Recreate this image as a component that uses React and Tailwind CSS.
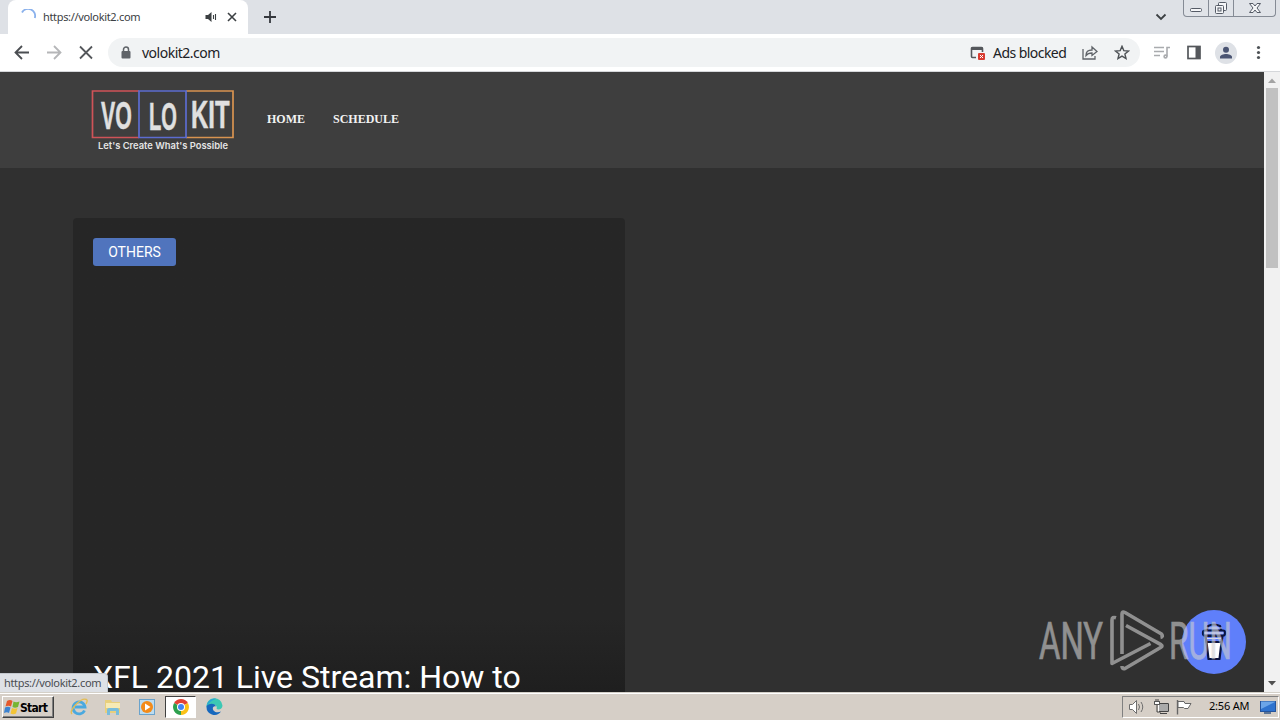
import React from 'react';

const TabStrip = () => (
  <div className="flex h-[34px] shrink-0 items-start bg-[#dee1e6] pl-2">
    <div className="flex h-[34px] w-60 items-center rounded-t-lg bg-white pl-3">
      <svg className="h-4 w-4 shrink-0" viewBox="0 0 16 16" fill="none">
        <path d="M2 3.5A7 7 0 0 1 14.8 9" stroke="#8ab1ec" strokeWidth="1.8" />
      </svg>
      <span className="ml-[7px] w-[162px] whitespace-nowrap text-[11px] tracking-[-0.33px] text-[#3c4043]">https://volokit2.com</span>
      <svg className="h-3 w-3 shrink-0" viewBox="0 0 12 12">
        <path d="M.5 4h2.500L6.500 1v10L3 8H.5z" fill="#3c4043" />
        <path d="M8.500 4v4M10.500 3v6" stroke="#3c4043" strokeWidth="1.100" />
      </svg>
      <svg className="ml-[9px] h-3 w-3 shrink-0" viewBox="0 0 12 12">
        <path d="M2 2l8 8M10 2l-8 8" stroke="#3c4043" strokeWidth="1.6" />
      </svg>
    </div>
    <svg className="ml-4 mt-[11px] h-3 w-3" viewBox="0 0 12 12">
      <path d="M6 0v12M0 6h12" stroke="#35383d" strokeWidth="1.8" />
    </svg>
    <svg className="ml-auto mr-4 mt-[13px] h-2 w-3" viewBox="0 0 12 8">
      <path d="M1.500 1.500L6 6l4.500-4.500" fill="none" stroke="#3c4043" strokeWidth="1.8" />
    </svg>
    <div className="mr-1 flex h-[17px] w-[93px] overflow-hidden rounded-b border border-t-0 border-[#858b95] bg-[#e0e3e8]">
      <svg className="h-full w-full" viewBox="0 0 91 16" fill="none" stroke="#555b66">
        <path d="M24.500 0v16M49.500 0v16" stroke="#858b95" />
        <rect x="6.500" y="8.500" width="11" height="3" rx="1" fill="#f5f6f8" />
        <rect x="34.500" y="2.500" width="8" height="8" rx="1" fill="#f5f6f8" />
        <rect x="31.500" y="5.500" width="8" height="8" rx="1" fill="#f5f6f8" />
        <rect x="34" y="8" width="3" height="3" />
        <path d="M65.500 3.500h3.500l2 2.500 2-2.500h3.500l-3.500 4.500 3.500 4.500h-3.500l-2-2.500-2 2.500h-3.500l3.500-4.500z" fill="#f5f6f8" />
      </svg>
    </div>
  </div>
);

const Toolbar = () => (
  <div className="flex h-[38px] shrink-0 items-center border-b border-[#d5d7da] bg-white px-[14px]">
    <svg className="h-4 w-4" viewBox="0 0 16 16" fill="none" stroke="#4b4e52" strokeWidth="1.8">
      <path d="M15 7.500H2M8 1L1.500 7.500 8 14" />
    </svg>
    <svg className="ml-4 h-4 w-4" viewBox="0 0 16 16" fill="none" stroke="#b5b6b8" strokeWidth="1.8">
      <path d="M1 7.500h13M8 1l6.500 6.500L8 14" />
    </svg>
    <svg className="ml-4 h-4 w-4" viewBox="0 0 16 16" stroke="#54575b" strokeWidth="1.800">
      <path d="M2 1.500l12 12M14 1.500l-12 12" />
    </svg>
    <div className="ml-[14px] flex h-[29px] w-[1032px] items-center rounded-full bg-[#f1f3f4] pl-3">
      <svg className="h-3.5 w-3" viewBox="0 0 12 14">
        <path d="M3.500 6V3.500a2.500 2.500 0 0 1 5 0V6" fill="none" stroke="#5f6368" strokeWidth="1.500" />
        <rect x="1.500" y="5" width="9" height="7.500" rx="1" fill="#5f6368" />
      </svg>
      <span className="ml-[10px] w-[828px] whitespace-nowrap text-[14px] tracking-[-0.5px] text-[#202124]">volokit2.com</span>
      <svg className="h-4 w-4 shrink-0" viewBox="0 0 16 16">
        <path d="M6 12.500H2.500a1 1 0 0 1-1-1v-8a1 1 0 0 1 1-1h9a1 1 0 0 1 1 1V7" fill="none" stroke="#54575b" strokeWidth="1.600" />
        <path d="M1.500 2h11v3h-11z" fill="#54575b" />
        <rect x="8" y="8" width="7" height="7" rx="1" fill="#d93b30" />
        <path d="M10 10l3 3M13 10l-3 3" stroke="#fff" />
      </svg>
      <span className="ml-[7px] w-[73px] whitespace-nowrap text-[14px] tracking-[-0.55px] text-[#202124]">Ads blocked</span>
      <svg className="ml-4 h-4 w-4 shrink-0" viewBox="0 0 16 16" fill="none" stroke="#5f6368" strokeWidth="1.300">
        <path d="M1 4v10h12v-3M4 10.500c0-4 2-5.500 6-5.500V2l5 4.500-5 4V8c-3 0-4.500.5-6 2.500z" />
      </svg>
      <svg className="ml-4 h-4 w-4 shrink-0" viewBox="0 0 16 16" fill="none" stroke="#4e5256" strokeWidth="1.400">
        <path d="M8 1.300l1.800 4.300 4.700.4-3.600 3 1.100 4.600L8 11.100l-4 2.500L5.100 9 1.500 6l4.700-.4z" />
      </svg>
    </div>
    <svg className="ml-[14px] h-4 w-4" viewBox="0 0 16 16" fill="none" stroke="#a9abae" strokeWidth="1.600">
      <path d="M0 2.500h10M0 6.500h10M0 10.500h6M13 11.500v-9h3" />
      <circle cx="11.500" cy="11.500" r="1.400" />
    </svg>
    <svg className="ml-4 h-4 w-4" viewBox="0 0 16 16">
      <rect x="2" y="1.500" width="12" height="12" fill="none" stroke="#54575b" strokeWidth="1.700" />
      <path d="M9.500 1.500H14v12H9.500z" fill="#54575b" />
    </svg>
    <svg className="ml-[13px] h-[22px] w-[22px]" viewBox="0 0 22 22">
      <circle cx="11" cy="11" r="11" fill="#dee1e6" />
      <circle cx="11" cy="7.700" r="3" fill="#4a5472" />
      <path d="M5 16.500v-1.500c0-2 3.500-3 6-3s6 1 6 3v1.500z" fill="#4a5472" />
    </svg>
    <svg className="ml-auto h-4 w-4" viewBox="0 0 16 16" fill="#4e5256">
      <circle cx="8.500" cy="2.500" r="1.600" />
      <circle cx="8.500" cy="7.500" r="1.600" />
      <circle cx="8.500" cy="12.500" r="1.600" />
    </svg>
  </div>
);

const Logo = () => (
  <svg className="h-16 w-36" viewBox="0 0 144 64">
    <g fill="none" strokeWidth="1.700">
      <path d="M48 3H1.500v46.500H48" stroke="#cf5358" />
      <path d="M95 3h47v46.500H95" stroke="#d89350" />
      <path d="M48 3h47v46.500H48z" stroke="#5c6cd0" />
    </g>
    <g fill="#e0e0e0" stroke="#e0e0e0" strokeWidth="0.500" fontFamily="'Liberation Sans', sans-serif" fontSize="38" fontWeight="700">
      <text transform="translate(10 40.500) scale(.56 1)">VO</text>
      <text transform="translate(58 41.500) scale(.53 1)">LO</text>
      <text transform="translate(100 39.500) scale(.63 1)">KIT</text>
    </g>
    <text x="7" y="60.500" fill="#e4e4e4" fontFamily="Inter, sans-serif" fontSize="9.500" fontWeight="600" textLength="130" lengthAdjust="spacingAndGlyphs">Let's Create What's Possible</text>
  </svg>
);

const SiteHeader = () => (
  <header className="flex h-24 items-center bg-[#3e3e3e] pl-[91px]">
    <Logo />
    <nav className="flex gap-7 pb-0.5 pl-8 font-['Liberation_Serif',serif] text-[12px] font-bold text-[#f2f2f2]">
      <a className="whitespace-nowrap">HOME</a>
      <a className="whitespace-nowrap">SCHEDULE</a>
    </nav>
  </header>
);

const FeaturedPost = () => (
  <article className="ml-[73px] mt-[50px] flex h-[500px] w-[552px] flex-col items-start rounded bg-linear-to-b from-[#262626] from-80% to-[#1c1c1c] p-5 font-[Roboto,sans-serif] text-white">
    <span className="flex h-7 w-[83px] items-center justify-center rounded-[3px] bg-[#5074bd] text-[14px]">OTHERS</span>
    <h2 className="mt-[390px] whitespace-nowrap text-[32px] leading-[42px]">XFL 2021 Live Stream: How to</h2>
  </article>
);

const CoffeeButton = () => (
  <svg className="absolute left-[1182px] top-[538px] h-16 w-16" viewBox="0 0 64 64">
    <circle cx="32" cy="32" r="32" fill="#5f7ffa" />
    <g stroke="#0b1440" strokeWidth="2.200" strokeLinejoin="round">
      <path d="M24 28l2.500 21h11L40 28z" fill="#fff" />
      <path d="M24.500 21l1.500-5q6-3 12 0l1.500 5z" fill="#5f7ffa" />
      <rect x="21" y="20.500" width="22" height="5" rx="2" fill="#7994ff" />
      <path d="M23.500 26h17l-1 6h-15z" fill="#5f7ffa" />
    </g>
    <path d="M24 18h16M23 23h18M25 28.500h14" stroke="#d6dcf5" strokeWidth="1" />
  </svg>
);

const Watermark = () => (
  <svg className="absolute left-[1036px] top-[534px] h-[72px] w-[200px]" viewBox="0 0 200 72" opacity="0.6">
    <g fill="#d0d0d0" stroke="#d0d0d0" strokeWidth="0.700" fontFamily="Roboto, sans-serif" fontSize="51">
      <text x="3" y="53" textLength="64" lengthAdjust="spacingAndGlyphs">ANY</text>
      <text x="133" y="53" textLength="63" lengthAdjust="spacingAndGlyphs">RUN</text>
    </g>
    <g fill="none" stroke="#d0d0d0" strokeWidth="3.600" strokeLinejoin="round" strokeLinecap="round">
      <path d="M80 11.800Q76 10.500 76 14v43.500l38.500-20" strokeLinecap="butt" />
      <path d="M86 48V8q0-3 3-1.500L125.500 28q2 3-1 3.500" strokeLinecap="butt" />
      <path d="M90 19.500l35 19.200q2 1.300 0 2.600L89 62.500q-3 1-3-2.500" strokeLinecap="butt" />
    </g>
  </svg>
);

const Scrollbar = () => (
  <div className="flex w-4 shrink-0 flex-col items-center bg-[#f1f1f1]">
    <svg className="h-4 w-4" viewBox="0 0 16 16">
      <path d="M4 11h8L8 6.500z" fill="#a3a3a3" />
    </svg>
    <div className="h-[180px] w-3 bg-[#c1c1c1]"></div>
    <svg className="mt-auto mb-[1px] h-4 w-4" viewBox="0 0 16 16">
      <path d="M4 6h8l-4 4.500z" fill="#505050" />
    </svg>
  </div>
);

const QuickLaunch = () => (
  <div className="flex items-center">
    <svg className="ml-4 h-[18px] w-[18px]" viewBox="0 0 18 18" fill="none">
      <path d="M14.500 12.500A6 6 0 1 1 15 9H5" stroke="#4aa9df" strokeWidth="2.800" />
      <path d="M2 16C-2 13 11-1 16.500 1.500q1.500 1-.5 4.500" stroke="#e3bd55" strokeWidth="1.400" />
    </svg>
    <svg className="ml-4 h-[18px] w-[18px]" viewBox="0 0 18 18">
      <path d="M1 2h6l1 2h8v11H1z" fill="#e8cf7c" />
      <path d="M2 5h14v5H2z" fill="#f7eab4" />
      <path d="M3 17v-5q0-2 2-2h8q2 0 2 2v5h-3v-4H6v4z" fill="#79bddb" />
    </svg>
    <svg className="ml-4 h-[18px] w-[18px]" viewBox="0 0 18 18">
      <rect x="1.500" y="1.500" width="15" height="15" fill="#bcdcf0" stroke="#6aa3cc" />
      <circle cx="9" cy="9" r="6" fill="#f38b19" />
      <path d="M7 5.500L12.500 9 7 12.500z" fill="#fff" />
    </svg>
    <div className="ml-[9px] flex h-[22px] w-[31px] items-center justify-center border border-b-white border-l-[#404040] border-r-white border-t-[#404040] bg-white">
      <svg className="h-4 w-4" viewBox="0 0 16 16">
        <path d="M8 8L1.100 4A8 8 0 0 1 14.900 4z" fill="#e34235" />
        <path d="M8 8l6.900-4A8 8 0 0 1 8 16z" fill="#fbc116" />
        <path d="M8 8v8A8 8 0 0 1 1.100 4z" fill="#2da04e" />
        <circle cx="8" cy="8" r="4" fill="#fff" />
        <circle cx="8" cy="8" r="3" fill="#4285f4" />
      </svg>
    </div>
    <svg className="ml-[10px] h-[17px] w-[17px]" viewBox="0 0 17 17">
      <path d="M.5 9A8 8 0 0 1 16.500 7.500c0 4-4 4.500-6 3.500 1-2-.5-4.500-3.500-4.500C4 6.500 1 8 .5 9z" fill="#3cc8b4" />
      <path d="M.5 9C1 3 6 0 10 .700 5 3 1 6 .5 9z" fill="#2aa7d5" />
      <path d="M.5 8.500c1.500-3 8-4 9.500 0-3-1-4 2-2.500 4 2 2.500 5.500 2 7.500 1A8 8 0 0 1 .5 8.500z" fill="#1768bd" />
    </svg>
  </div>
);

const Tray = () => (
  <div className="ml-auto mr-[1px] flex h-[22px] w-[157px] items-center border border-b-white border-l-[#808080] border-r-white border-t-[#808080] pl-[6px]">
    <svg className="h-4 w-4" viewBox="0 0 16 16" fill="#fff" stroke="#6e6e6e">
      <path d="M.5 5.500h3l4-4v13l-4-4h-3z" />
      <path d="M9.500 5q2 3 0 6M12 3q3.500 5 0 10" fill="none" />
    </svg>
    <svg className="ml-2 h-4 w-4" viewBox="0 0 16 16" fill="none" stroke="#555">
      <rect x="5.500" y="4.500" width="10" height="8" fill="#aaa" stroke="#fff" />
      <path d="M6 4.500h9.500v8H6M1.500 2v3.500h5V2M3 3V0M5 3V0M4 5v8h4M7 14.500h7" stroke="#444" />
      <path d="M1.500 2.500h5v3h-5z" fill="#fff" />
    </svg>
    <svg className="ml-[7px] h-4 w-4" viewBox="0 0 16 16" fill="#fff" stroke="#666">
      <path d="M1.500 1v14.500" strokeWidth="1.400" />
      <path d="M2 2.500h6l1 2h6l-3 5H8.500l-1-1H2z" />
    </svg>
    <span className="ml-[17px] w-[42px] whitespace-nowrap text-[11px] tracking-[-0.2px] text-black">2:56 AM</span>
    <svg className="ml-[9px] h-4 w-4" viewBox="0 0 16 16">
      <rect x=".5" y="2.500" width="15" height="10" fill="#2f73ce" stroke="#25549c" />
      <path d="M1 10L15 3v-.5H1z" fill="#6ba5e8" />
      <path d="M4 14h7" stroke="#345785" strokeWidth="1.500" />
    </svg>
  </div>
);

const Taskbar = () => (
  <div className="flex h-7 shrink-0 items-center border-t border-[#d4d0c8] bg-[#d6cfc7] pl-0.5 shadow-[inset_0_1px_0_#fff]">
    <div className="flex h-[22px] w-[52px] items-center border border-b-[#404040] border-l-white border-r-[#404040] border-t-white pl-[1px] shadow-[inset_-1px_-1px_0_#808080]">
      <svg className="h-4 w-4 shrink-0" viewBox="0 0 16 16">
        <path d="M3 2q3-2 5.500 0L7 7.500Q4.500 6 1.500 7.500z" fill="#e5582b" />
        <path d="M9.500 2.500q2.500 1.500 6 0L14 8q-3 1.500-5.500 0z" fill="#76b531" />
        <path d="M1 8.500q3-1.500 5.500 0L5 14q-2-1.500-5 0z" fill="#3d83d0" />
        <path d="M8 9q3 1.500 5.500 0L12 14.500q-3 1.500-5.500 0z" fill="#f3c435" />
      </svg>
      <span className="pt-0.5 font-['DejaVu_Sans_Condensed','DejaVu_Sans',sans-serif] text-[12px] font-bold tracking-[-0.7px] text-black">Start</span>
    </div>
    <QuickLaunch />
    <Tray />
  </div>
);

const App = () => {
  return (
    <div className="flex h-[720px] w-[1280px] flex-col overflow-hidden font-['Noto_Sans','DejaVu_Sans',sans-serif]">
      <TabStrip />
      <Toolbar />
      <div className="relative flex h-[620px] shrink-0">
        <main className="h-[620px] flex-1 overflow-hidden bg-[#303030]">
          <SiteHeader />
          <FeaturedPost />
        </main>
        <Scrollbar />
        <CoffeeButton />
        <Watermark />
        <div className="absolute bottom-0 left-0 flex h-[19px] w-[108px] items-center rounded-tr border-r border-t border-[#c3c7cd] bg-[#dee1e6] pl-1 text-[11px] tracking-[-0.33px] text-[#4a4d52]">
          https://volokit2.com
        </div>
      </div>
      <Taskbar />
    </div>
  );
};

export default App;
